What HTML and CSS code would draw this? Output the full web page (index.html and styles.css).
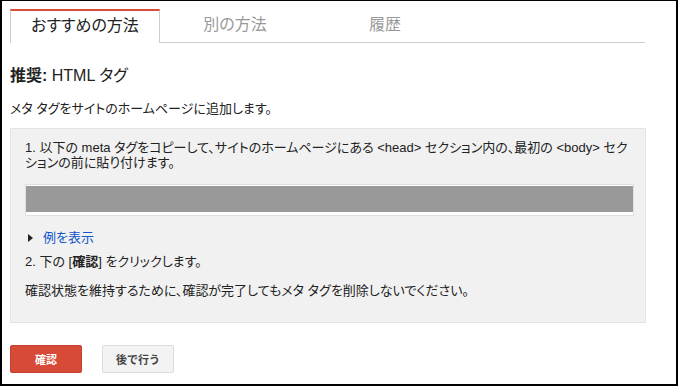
FILE: index.html
```html
<!DOCTYPE html>
<html lang="ja">
<head>
<meta charset="utf-8"/>
<title>所有権の確認</title>
<link rel="stylesheet" href="styles.css">
</head>
<body>
<div class="frame">
<div class="content">

<div class="tabs">
  <div class="tab active">おすすめの方法</div>
  <div class="tab">別の方法</div>
  <div class="tab">履歴</div>
</div>

<h2 class="method-title"><b>推奨:</b> HTML タグ</h2>
<p class="intro">メタ タグをサイトのホームページに追加します。</p>

<div class="steps">
  <p class="step">1. 以下の meta タグをコピーして、サイトのホームページにある &lt;head&gt; セクション内の、最初の &lt;body&gt; セクションの前に貼り付けます。</p>
  <div class="code"><div class="code-inner"></div></div>
  <p class="example"><span class="arrow"></span><a href="#">例を表示</a></p>
  <p class="step">2. 下の [<b>確認</b>] をクリックします。</p>
  <p class="note">確認状態を維持するために、確認が完了してもメタ タグを削除しないでください。</p>
</div>

<div class="actions">
  <button class="btn btn-red">確認</button>
  <button class="btn btn-gray">後で行う</button>
</div>

</div>
</div>
</body>
</html>
```

FILE: styles.css
```css
body {
    margin: 0;
    padding: 0;
    font-family: Arial, "Liberation Sans", "Noto Sans CJK JP", sans-serif;
    font-feature-settings: "palt";
    color: #222;
    background: #fff;
}

.frame {
    width: 678px;
    height: 386px;
    box-sizing: border-box;
    border: 2px solid #000;
    border-top-width: 1px;
    padding: 8px 0 0 8px;
}

.content {
    width: 636px;
}

/* tabs */
.tabs {
    display: flex;
    height: 33px;
    border-bottom: 1px solid #ccc;
    margin-right: 1px;
}

.tab {
    width: 150px;
    box-sizing: border-box;
    text-align: center;
    font-size: 16px;
    line-height: 30px;
    color: #999;
    padding-top: 1px;
}

.tab.active {
    color: #222;
    border-top: 2px solid #dd4b39;
    border-left: 1px solid #ccc;
    border-right: 1px solid #ccc;
    height: 34px;
    background: #fff;
    padding-top: 0;
}

.method-title {
    margin: 23px 0 0;
    font-size: 16px;
    font-weight: normal;
    line-height: 20px;
}

.method-title b {
    font-weight: bold;
}

.intro {
    margin: 14px 0 0;
    font-size: 13px;
    line-height: 18px;
}

/* gray box */
.steps {
    margin-top: 10px;
    background: #f1f1f1;
    border: 1px solid #e5e5e5;
    padding: 11px 11px 24px 14px;
    font-size: 13px;
    line-height: 15px;
}

.step, .note, .example {
    margin: 0;
}

.code {
    margin-top: 14px;
    border: 1px solid #e0e0e0;
    background: #fff;
    padding: 1px 0 3px;
}

.code-inner {
    height: 26px;
    background: #999;
}

.example {
    margin-top: 14px;
    padding-left: 3px;
    display: flex;
    align-items: center;
}

.arrow {
    width: 0;
    height: 0;
    border-left: 5px solid #222;
    border-top: 4px solid transparent;
    border-bottom: 4px solid transparent;
    margin-right: 10px;
}

.example a {
    color: #15c;
    text-decoration: none;
}

.step + .note {
    margin-top: 14px;
}

.example + .step {
    margin-top: 9px;
}

/* buttons */
.actions {
    display: flex;
    gap: 20px;
    margin-top: 22px;
}

.btn {
    width: 72px;
    height: 28px;
    box-sizing: border-box;
    border-radius: 2px;
    font-family: Arial, "Liberation Sans", "Noto Sans CJK JP", sans-serif;
    font-size: 11px;
    font-weight: bold;
    padding: 0;
}

.btn-red {
    background: #d84a38;
    border: 1px solid #c6402f;
    color: #fff;
}

.btn-gray {
    background: #f3f3f3;
    border: 1px solid #dcdcdc;
    color: #444;
}
```
